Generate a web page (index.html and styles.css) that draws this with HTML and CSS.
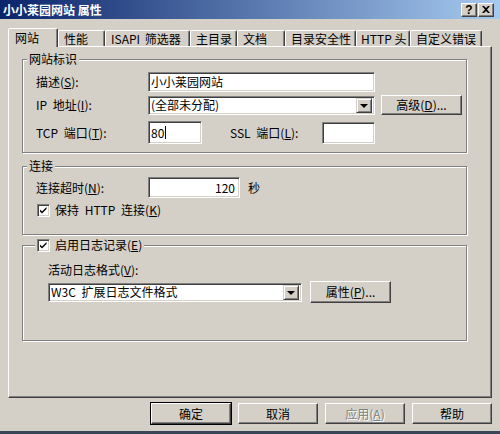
FILE: index.html
```html
<!DOCTYPE html>
<html lang="zh-CN">
<head>
  <meta charset="UTF-8" />
  <title>小小莱园网站 属性</title>
  <link rel="stylesheet" href="styles.css">
</head>
<body>
  <div class="window">
    <div class="titlebar">
      <span class="title">小小莱园网站 属性</span>
      <div class="title-btns">
        <span class="tbtn help">?</span>
        <span class="tbtn">
          <svg width="8" height="7" viewBox="0 0 8 7"><path d="M0 0h2l2 2 2-2h2L5 3.5 8 7H6L4 5 2 7H0l3-3.5z" fill="#000"/></svg>
        </span>
      </div>
    </div>

    <div class="content">
      <!-- tab strip -->
      <div class="tabs">
        <span class="tab active">网站</span>
        <span class="tab">性能</span>
        <span class="tab t-isapi">ISAPI 筛选器</span>
        <span class="tab">主目录</span>
        <span class="tab t-doc">文档</span>
        <span class="tab t-sec">目录安全性</span>
        <span class="tab t-http">HTTP 头</span>
        <span class="tab t-err">自定义错误</span>
      </div>

      <div class="panel">
        <fieldset class="group ident">
          <legend>网站标识</legend>
          <div class="row r-desc">
            <label class="lbl">描述(<u>S</u>):</label>
            <div class="field w-long">小小莱园网站</div>
          </div>
          <div class="row r-ip">
            <label class="lbl">IP 地址(<u>I</u>):</label>
            <div class="field select w-long">(全部未分配)<span class="drop"></span></div>
            <span class="btn w-adv">高级(<u>D</u>)...</span>
          </div>
          <div class="row r-port">
            <label class="lbl">TCP 端口(<u>T</u>):</label>
            <div class="field w-port">80<span class="caret"></span></div>
            <label class="lbl-ssl">SSL 端口(<u>L</u>):</label>
            <div class="field w-ssl"></div>
          </div>
        </fieldset>

        <fieldset class="group conn">
          <legend>连接</legend>
          <div class="row r-timeout">
            <label class="lbl">连接超时(<u>N</u>):</label>
            <div class="field w-time num">120</div>
            <span class="unit">秒</span>
          </div>
          <div class="check-row">
            <span class="check"><svg width="9" height="9" viewBox="0 0 9 9"><path d="M1 3.5l2 2 4.5-4.5v2L3 7.5 1 5.5z" fill="#000"/></svg></span>
            <span>保持 HTTP 连接(<u>K</u>)</span>
          </div>
        </fieldset>

        <fieldset class="group log">
          <legend>
            <span class="check"><svg width="9" height="9" viewBox="0 0 9 9"><path d="M1 3.5l2 2 4.5-4.5v2L3 7.5 1 5.5z" fill="#000"/></svg></span>
            <span>启用日志记录(<u>E</u>)</span>
          </legend>
          <div class="log-inner">
            <div class="log-label">活动日志格式(<u>V</u>):</div>
            <div class="row r-format">
              <div class="field select w-format">W3C 扩展日志文件格式<span class="drop"></span></div>
              <span class="btn w-adv">属性(<u>P</u>)...</span>
            </div>
          </div>
        </fieldset>
      </div>

      <div class="actions">
        <span class="btn act default">确定</span>
        <span class="btn act">取消</span>
        <span class="btn act disabled">应用(<u>A</u>)</span>
        <span class="btn act">帮助</span>
      </div>
    </div>
  </div>
</body>
</html>
```

FILE: styles.css
```css
* {
  box-sizing: border-box;
}

body {
  margin: 0;
  width: 500px;
  height: 434px;
  overflow: hidden;
  background: #d4d0c8;
  color: #000;
  font-family: "Noto Sans CJK SC", "Liberation Sans", sans-serif;
  font-size: 12px;
  line-height: 14px;
}

u {
  text-decoration: underline;
  text-underline-offset: 1px;
}

.window {
  height: 434px;
  display: flex;
  flex-direction: column;
  border-bottom: 3px solid #3a4656;
}

/* title bar */
.titlebar {
  height: 19px;
  flex: none;
  display: flex;
  align-items: center;
  justify-content: space-between;
  padding: 0 6px 0 3px;
  background: linear-gradient(to right, #0a246a, #a6caf0);
  color: #fff;
  font-weight: bold;
}

.title-btns {
  display: flex;
  gap: 1px;
}

.tbtn {
  width: 16px;
  height: 14px;
  display: flex;
  align-items: center;
  justify-content: center;
  background: #d4d0c8;
  border: 1px solid;
  border-color: #fff #404040 #404040 #fff;
  box-shadow: inset -1px -1px #808080;
  color: #000;
  font-family: "Liberation Sans", sans-serif;
  font-weight: bold;
  font-size: 12px;
}

.content {
  padding: 9px 8px 0 8px;
}

/* tabs */
.tabs {
  display: flex;
  align-items: flex-end;
  height: 18px;
  position: relative;
  z-index: 1;
}

.tab {
  height: 16px;
  min-width: 47px;
  padding: 1px 4px 0 5px;
  border: 1px solid;
  border-bottom: none;
  border-color: #fff #404040 transparent #fff;
  border-radius: 2px 2px 0 0;
  box-shadow: inset -1px 0 #808080;
  white-space: nowrap;
}

.tab.active {
  height: 19px;
  width: 50px;
  margin-bottom: -1px;
  padding-top: 2px;
  padding-left: 6px;
  background: #d4d0c8;
}

.t-isapi {
  width: 85px;
  word-spacing: 2px;
}

.t-doc {
  width: 48px;
}

.t-sec {
  width: 71px;
}

.t-http {
  width: 54px;
  padding-left: 4px;
}

.t-err {
  width: 72px;
}

/* panel */
.panel {
  height: 352px;
  padding: 5px 24px 0 13px;
  border: 1px solid;
  border-color: #fff #404040 #404040 #fff;
  box-shadow: inset -1px -1px #808080;
}

.group {
  margin: 0;
  min-width: 0;
  padding: 0 0 0 13px;
  border: 1px solid #808080;
  box-shadow: 1px 1px 0 #fff, inset 1px 1px 0 #fff;
}

.group legend {
  margin-left: -9px;
  padding: 0 2px;
  line-height: 14px;
  background: #d4d0c8;
}

.ident {
  padding-top: 6px;
  padding-bottom: 8px;
}

.conn {
  margin-top: 6px;
  padding-top: 4px;
  padding-bottom: 17px;
}

.log {
  margin-top: 3px;
  padding-bottom: 37px;
}

.log legend {
  display: flex;
  align-items: center;
  gap: 5px;
  margin-left: -1px;
}

.row {
  display: flex;
  align-items: center;
}

.lbl {
  width: 112px;
  word-spacing: 3px;
}

.r-desc {
  height: 20px;
}

.r-ip {
  height: 20px;
  margin-top: 3px;
}

.r-port {
  height: 23px;
  margin-top: 6px;
}

/* sunken text fields */
.field {
  position: relative;
  height: 20px;
  padding: 0 2px;
  display: flex;
  align-items: center;
  background: #fff;
  border: 1px solid;
  border-color: #808080 #fff #fff #808080;
  box-shadow: inset 1px 1px #404040, inset -1px -1px #d4d0c8;
  white-space: nowrap;
}

.w-long {
  width: 227px;
}

.select {
  height: 19px;
}

.drop {
  position: absolute;
  right: 2px;
  top: 1px;
  width: 16px;
  height: 15px;
  background: #d4d0c8;
  border: 1px solid;
  border-color: #d4d0c8 #404040 #404040 #d4d0c8;
  box-shadow: inset 1px 1px #fff, inset -1px -1px #808080;
}

.drop::after {
  content: "";
  position: absolute;
  left: 3px;
  top: 5px;
  border-left: 4px solid transparent;
  border-right: 4px solid transparent;
  border-top: 4px solid #000;
}

.w-port {
  width: 54px;
  height: 23px;
}

.caret {
  width: 1px;
  height: 13px;
  margin-left: 1px;
  background: #000;
}

.lbl-ssl {
  width: 92px;
  margin-left: 28px;
  word-spacing: 3px;
}

.w-ssl {
  width: 53px;
  height: 22px;
}

/* raised buttons */
.btn {
  height: 20px;
  display: flex;
  align-items: center;
  justify-content: center;
  background: #d4d0c8;
  border: 1px solid;
  border-color: #fff #404040 #404040 #fff;
  box-shadow: inset -1px -1px #808080;
  white-space: nowrap;
}

.w-adv {
  width: 81px;
  margin-left: 6px;
}

/* connection group */
.r-timeout {
  height: 21px;
}

.w-time {
  width: 92px;
  height: 21px;
}

.num {
  justify-content: flex-end;
  padding-right: 4px;
}

.unit {
  margin-left: 8px;
}

.check-row {
  display: flex;
  align-items: center;
  gap: 5px;
  margin-top: 5px;
  padding-left: 1px;
  word-spacing: 3px;
}

.check {
  width: 13px;
  height: 13px;
  flex: none;
  display: flex;
  align-items: center;
  justify-content: center;
  background: #fff;
  border: 1px solid;
  border-color: #808080 #fff #fff #808080;
  box-shadow: inset 1px 1px #404040, inset -1px -1px #d4d0c8;
}

/* log group */
.log-inner {
  padding: 11px 0 0 12px;
}

.r-format {
  height: 22px;
  margin-top: 4px;
}

.w-format {
  width: 254px;
  word-spacing: 3px;
}

.r-format .w-adv {
  height: 22px;
  margin-left: 8px;
}

/* dialog buttons */
.actions {
  display: flex;
  justify-content: flex-end;
  gap: 7px;
  margin-top: 5px;
}

.act {
  width: 80px;
  height: 21px;
}

.default {
  box-shadow: 0 0 0 1px #000, inset -1px -1px #808080;
}

.disabled {
  color: #808080;
  text-shadow: 1px 1px 0 #fff;
}
```
